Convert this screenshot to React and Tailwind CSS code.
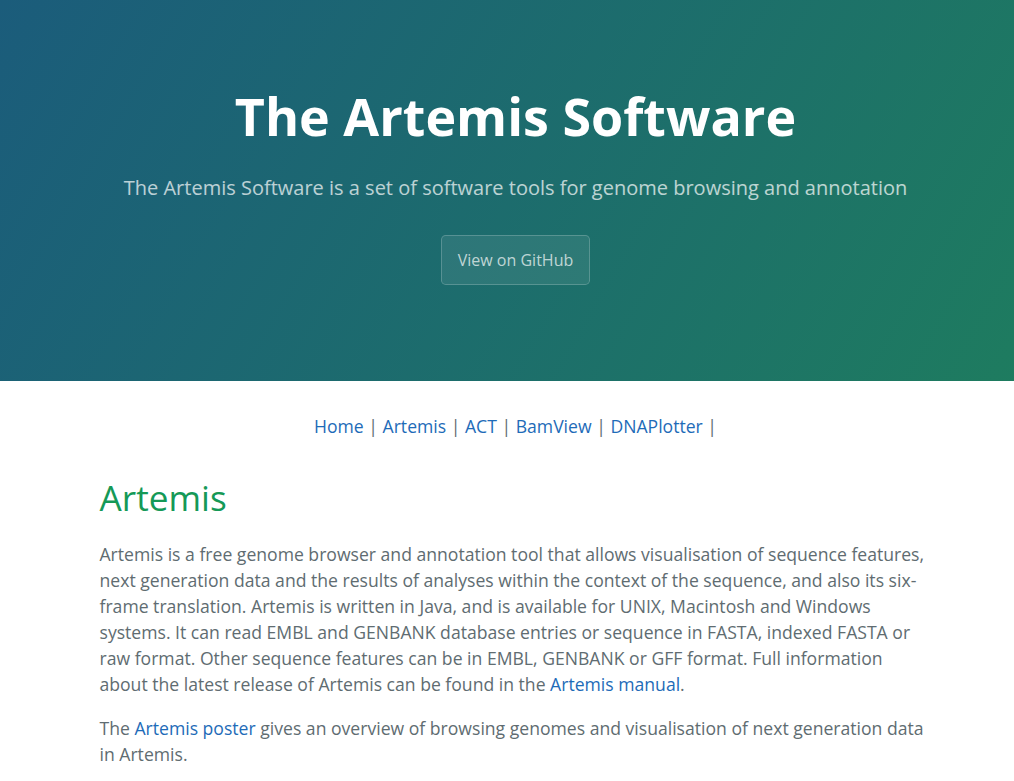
const links = ['Home', 'Artemis', 'ACT', 'BamView', 'DNAPlotter'];

const App = () => {
  return (
    <div className="h-screen overflow-hidden bg-white">
      <div className="w-[1031px] font-['Open_Sans',sans-serif] text-[#606c71] leading-[1.5]">
        {/* Header */}
        <section className="text-center text-white px-24 pt-[77px] pb-20 bg-[linear-gradient(120deg,#1b5c7b,#1e7c5f)]">
          <h1 className="text-[52px] font-bold leading-[1.5] mb-[1.6px]">The Artemis Software</h1>
          <h2 className="text-[20px] font-normal leading-[1.5] opacity-70 mt-[17.6px] mb-8">
            The Artemis Software is a set of software tools for genome browsing and annotation
          </h2>
          <a
            href="#"
            className="inline-block mb-4 px-4 py-3 text-base leading-6 text-white/70 bg-white/[0.08] border border-white/20 rounded-[0.3rem]"
          >
            View on GitHub
          </a>
        </section>

        {/* Main content */}
        <section className="max-w-[64rem] mx-auto px-24 pt-8 pb-8 text-[17.6px] leading-[26px]">
          <p className="text-center mb-[17.6px]">
            {links.map(l => (
              <span key={l}>
                <a href="#" className="text-[#1e6bb8]">{l}</a> |{' '}
              </span>
            ))}
          </p>

          <h1 className="text-[35.2px] font-normal text-[#159957] leading-[1.5] mt-8 mb-[17.6px]">Artemis</h1>

          <p className="mb-[17.6px]">
            Artemis is a free genome browser and annotation tool that allows visualisation of sequence
            features, next generation data and the results of analyses within the context of the
            sequence, and also its six-frame translation. Artemis is written in Java, and is available
            for UNIX, Macintosh and Windows systems. It can read EMBL and GENBANK database entries or
            sequence in FASTA, indexed FASTA or raw format. Other sequence features can be in EMBL,
            GENBANK or GFF format. Full information about the latest release of Artemis can be found in
            the <a href="#" className="text-[#1e6bb8]">Artemis manual</a>.
          </p>

          <p className="mb-[17.6px]">
            The <a href="#" className="text-[#1e6bb8]">Artemis poster</a> gives an overview of browsing
            genomes and visualisation of next generation data in Artemis.
          </p>
        </section>
      </div>
    </div>
  );
};

export default App;
